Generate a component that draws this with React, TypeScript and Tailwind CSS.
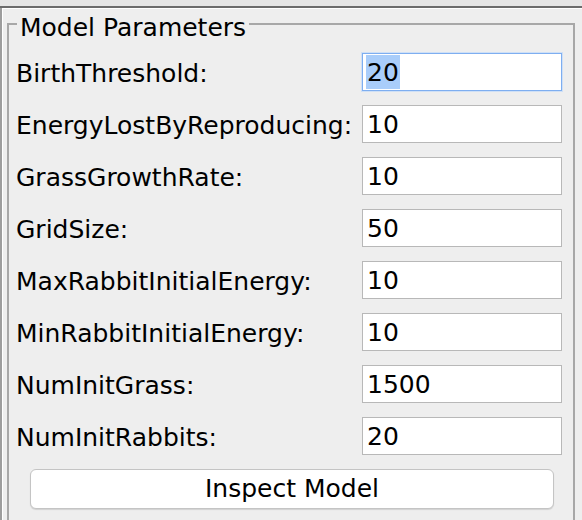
import { FC } from 'react';

interface Param {
  name: string;
  value: string;
  focused?: boolean;
}

const params: Param[] = [
  { name: 'BirthThreshold', value: '20', focused: true },
  { name: 'EnergyLostByReproducing', value: '10' },
  { name: 'GrassGrowthRate', value: '10' },
  { name: 'GridSize', value: '50' },
  { name: 'MaxRabbitInitialEnergy', value: '10' },
  { name: 'MinRabbitInitialEnergy', value: '10' },
  { name: 'NumInitGrass', value: '1500' },
  { name: 'NumInitRabbits', value: '20' },
];

const ParamRow: FC<{ param: Param }> = ({ param }) => (
  <div className="flex items-center h-[38px]">
    <span className="flex-1 whitespace-nowrap pt-[3px]">{param.name}:</span>
    {param.focused ? (
      <div className="w-[200px] h-[38px] bg-white border border-[#7eaef0] shadow-[0_0_0_1px_#cfe0f6] flex items-center pl-[3px]">
        <span className="bg-[#a9cdfa] px-[1px] leading-[33px] pt-[1px]">{param.value}</span>
      </div>
    ) : (
      <div className="w-[200px] h-[38px] bg-white border border-[#b8b8b8] flex items-center pl-[4px]">
        <span className="leading-[33px] pt-[1px]">{param.value}</span>
      </div>
    )}
  </div>
);

export default function App() {
  return (
    <div className="w-[582px] h-[520px] overflow-hidden bg-[#eeeeee] text-black text-[25px] font-['DejaVu_Sans',sans-serif] flex flex-col">
      {/* top strip of the enclosing window */}
      <div className="h-[8px] shrink-0 bg-[#e6e6e6] border-b-2 border-[#6c6c6c]" />
      <div className="flex-1 border-l-2 border-[#9d9d9d]">
        <div className="h-full border-l border-t border-white pl-[4px] pt-[14px]">
          {/* group box */}
          <div className="relative w-[568px] h-[520px] border-2 border-[#a7a7a7] pl-[7px] pr-[11px] pt-[28px]">
            <span className="absolute left-[8px] top-[-10px] px-[3px] bg-[#eeeeee] leading-[26px]">
              Model Parameters
            </span>
            <div className="flex flex-col gap-[14px]">
              {params.map((p) => (
                <ParamRow key={p.name} param={p} />
              ))}
              <button className="ml-[14px] mr-[8px] h-[40px] bg-white border border-[#c4c4c4] rounded-[6px] shadow-[0_1px_1px_rgba(0,0,0,0.12)] text-center leading-[38px]">
                Inspect Model
              </button>
            </div>
          </div>
        </div>
      </div>
    </div>
  );
}
